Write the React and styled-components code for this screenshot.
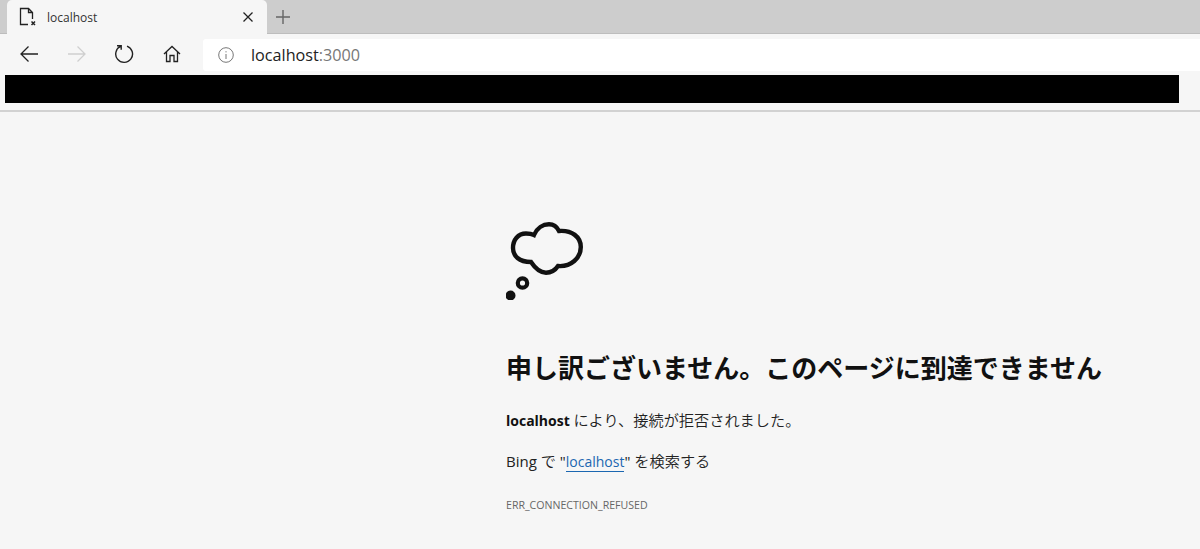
import React from "react";
import styled, { createGlobalStyle } from "styled-components";

const Global = createGlobalStyle`
  html, body { margin: 0; padding: 0; background: #f6f6f6; }
  body { font-family: "Open Sans", "Noto Sans CJK JP", sans-serif; overflow: hidden; }
`;
const Page = styled.div`width: 1200px; height: 549px; display: flex; flex-direction: column; background: #f6f6f6; overflow: hidden;`;
const TabStrip = styled.div`height: 33px; background: #cdcdcd; border-bottom: 1px solid #bdbdbd; display: flex; align-items: flex-start; padding-left: 7px; box-sizing: content-box;`;
const Tab = styled.div`width: 260px; height: 34px; box-sizing: border-box; background: #f6f6f6; border-radius: 5px 5px 0 0; display: flex; align-items: center; padding: 0 13px 0 12px; color: #222; margin-bottom: -1px;`;
const TabTitle = styled.span`font-family: "Open Sans", sans-serif; font-size: 12px; margin-left: 9px; flex: 1; color: #333;`;
const NewTab = styled.div`width: 30px; height: 33px; display: flex; align-items: center; justify-content: center; margin-left: 1px;`;
const Toolbar = styled.div`height: 40px; background: #f6f6f6; display: flex; align-items: center;`;
const NavButton = styled.div`width: 24px; height: 24px; display: flex; align-items: center; justify-content: center; margin-left: ${p => p.$gap}px;`;
const Omnibox = styled.div`flex: 1; height: 32px; margin: 2px 0 0 19px; background: #fff; border-radius: 3px 0 0 3px; display: flex; align-items: center; padding-left: 15px;`;
const Url = styled.span`font-family: "Open Sans", sans-serif; font-size: 16.2px; margin-left: 17px; color: #222;`;
const Port = styled.span`color: #777;`;
const Redaction = styled.div`height: 28px; width: 1174px; margin-left: 5px; background: #000; flex: none; margin-top: 1px;`;
const Divider = styled.div`height: 2px; background: #d2d2d2; margin-top: 7px; flex: none;`;
const Content = styled.main`flex: 1; padding: 108px 0 0 506px; color: #111;`;
const Cloud = styled.svg`display: block; margin-bottom: 50px;`;
const Heading = styled.h1`margin: 0 0 26px; font-family: "Noto Sans CJK JP", sans-serif; font-size: 26px; line-height: 34px; font-weight: 700; color: #111; white-space: nowrap;`;
const Message = styled.p`margin: 0 0 18px; height: 22px; font-size: 14px; line-height: 22px; color: #222; font-family: "Open Sans", sans-serif;`;
const SearchMessage = styled(Message)`font-size: 15px; margin-bottom: 0;`;
const Japanese = styled.span`font-family: "Noto Sans CJK JP", sans-serif; font-size: 15.2px; font-weight: 350; line-height: 1;`;
const Strong = styled.b`color: #111;`;
const SearchLink = styled.a`color: #1b67b1; border-bottom: 1px solid #1b67b1; text-decoration: none; font-size: 14px;`;
const Code = styled.div`margin-top: 26px; font-size: 10.6px; line-height: 14px; color: #666;`;

const stroke = { fill: "none", stroke: "currentColor", strokeWidth: 1.3 };

export default function App() {
  return (
    <Page>
      <Global />
      <TabStrip>
        <Tab>
          <svg width="19" height="20" viewBox="0 0 19 20" {...stroke}>
            <path d="M9 17.5H1.5V1.5H9.5L13.5 5.5V12M9.5 1.5V5.5H13.5" />
            <path d="M12.5 14.5L16 18M16 14.5L12.5 18" strokeWidth="1.5" />
          </svg>
          <TabTitle>localhost</TabTitle>
          <svg width="12" height="12" viewBox="0 0 12 12" {...stroke}><path d="M1.5 1.5L10.5 10.5M10.5 1.5L1.5 10.5" /></svg>
        </Tab>
        <NewTab>
          <svg width="16" height="16" viewBox="0 0 16 16" fill="none" stroke="#666" strokeWidth="1.4"><path d="M8 1V15M1 8H15" /></svg>
        </NewTab>
      </TabStrip>
      <Toolbar>
        <NavButton $gap={17}>
          <svg width="20" height="18" viewBox="0 0 20 18" fill="none" stroke="#222" strokeWidth="1.3"><path d="M19 9H2M9.5 1.5L2 9L9.5 16.5" /></svg>
        </NavButton>
        <NavButton $gap={24}>
          <svg width="20" height="18" viewBox="0 0 20 18" fill="none" stroke="#cfcfcf" strokeWidth="1.3"><path d="M1 9H18M10.5 1.5L18 9L10.5 16.5" /></svg>
        </NavButton>
        <NavButton $gap={23}>
          <svg width="20" height="20" viewBox="0 0 20 20" fill="none" stroke="#222" strokeWidth="1.4"><path d="M7 2.2A8.4 8.4 0 1 0 13 2.1M3 1.8H7.2V5.8" /></svg>
        </NavButton>
        <NavButton $gap={24}>
          <svg width="18" height="18" viewBox="0 0 18 18" fill="none" stroke="#222" strokeWidth="1.3"><path d="M1 9L9 1.5L17 9M3.5 7V16.5H7V10.5H11V16.5H14.5V7" /></svg>
        </NavButton>
        <Omnibox>
          <svg width="16" height="16" viewBox="0 0 16 16" fill="none" stroke="#777" strokeWidth="1"><circle cx="8" cy="8" r="7.3" /><path d="M8 7V12M8 4.2V5.4" /></svg>
          <Url>localhost<Port>:3000</Port></Url>
        </Omnibox>
      </Toolbar>
      <Redaction />
      <Divider />
      <Content>
        <Cloud width="78" height="80" viewBox="0 0 78 80">
          <path fill="none" stroke="#111" strokeWidth="4.4" d="M28 15C31 8 37 4.3 43 4.3C48 4.3 51 7 53 11C66 10 74.8 17 74.8 27C74.8 38 65 47 52 46C49 50.5 45 52.7 40 52.7C34 52.7 29 48 25 42C13 42 7 36 7 28C7 20 12 13.5 20 13.5C23 13.5 26 14 28 15Z" />
          <circle cx="16.5" cy="63" r="4.7" fill="none" stroke="#111" strokeWidth="4.2" />
          <circle cx="4.5" cy="75.5" r="5" fill="#111" />
        </Cloud>
        <Heading>申し訳ございません。このページに到達できません</Heading>
        <Message><Strong>localhost</Strong> <Japanese>により、接続が拒否されました。</Japanese></Message>
        <SearchMessage>Bing <Japanese>で</Japanese> "<SearchLink href="#">localhost</SearchLink>" <Japanese>を検索する</Japanese></SearchMessage>
        <Code>ERR_CONNECTION_REFUSED</Code>
      </Content>
    </Page>
  );
}
